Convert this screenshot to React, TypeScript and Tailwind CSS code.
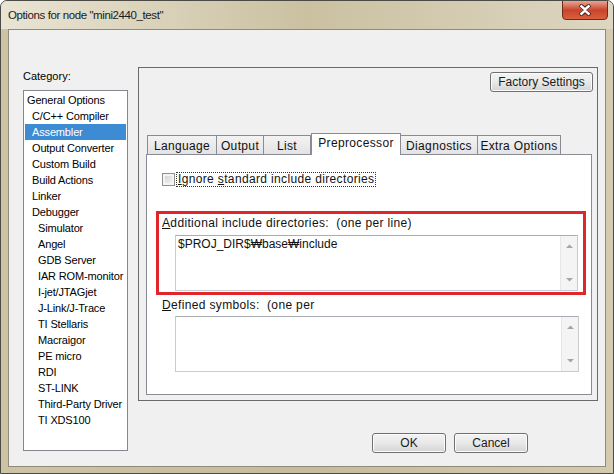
import React from "react";

// Category tree rows: [label, indent level]
const categories: [string, number][] = [
  ["General Options", 0],
  ["C/C++ Compiler", 1],
  ["Assembler", 1],
  ["Output Converter", 1],
  ["Custom Build", 1],
  ["Build Actions", 1],
  ["Linker", 1],
  ["Debugger", 1],
  ["Simulator", 2],
  ["Angel", 2],
  ["GDB Server", 2],
  ["IAR ROM-monitor", 2],
  ["I-jet/JTAGjet", 2],
  ["J-Link/J-Trace", 2],
  ["TI Stellaris", 2],
  ["Macraigor", 2],
  ["PE micro", 2],
  ["RDI", 2],
  ["ST-LINK", 2],
  ["Third-Party Driver", 2],
  ["TI XDS100", 2],
];

const tabs = [
  { label: "Language", w: "w-[70px]" },
  { label: "Output", w: "w-[47px]" },
  { label: "List", w: "w-[47px]" },
  { label: "Preprocessor", w: "w-[90px]", active: true },
  { label: "Diagnostics", w: "w-[77px]" },
  { label: "Extra Options", w: "w-[83px]" },
];

const sans = "font-['Liberation_Sans',Arial,sans-serif]";

function WinButton({ label, className }: { label: string; className: string }) {
  return (
    <div
      className={`flex h-[20px] items-center justify-center rounded-[3px] border border-[#707070] bg-linear-to-b from-[#f3f3f3] via-[#e9e9e9] to-[#d4d4d4] text-[12px] text-[#1a1a1a] shadow-[inset_0_0_0_1px_#fcfcfc] ${className}`}
    >
      {label}
    </div>
  );
}

function ScrollArrows() {
  return (
    <div className="flex w-[17px] flex-col justify-between border-l border-[#e6e6e6] bg-[#f4f4f4] py-[6px]">
      <svg width="17" height="8" viewBox="0 0 17 8">
        <path d="M5 6 L8.5 2.5 L12 6 Z" fill="#a6a6a6" />
      </svg>
      <svg width="17" height="8" viewBox="0 0 17 8">
        <path d="M5 2 L8.5 5.5 L12 2 Z" fill="#a6a6a6" />
      </svg>
    </div>
  );
}

function MultiLine({ text, className }: { text?: string; className: string }) {
  return (
    <div
      className={`flex h-[56px] border border-[#c9cbd0] border-t-[#a9acb3] bg-white ${className}`}
    >
      <div className="flex-1 pl-[2px] pt-[1px] text-[12px] leading-[14px] text-[#111]">
        {text}
      </div>
      <ScrollArrows />
    </div>
  );
}

export default function App() {
  return (
    <div
      className={`flex h-[474px] w-[614px] flex-col overflow-hidden rounded-t-[7px] border border-[#4b4a44] bg-linear-to-r from-[#cdc4a6] via-[#c6bc9b] to-[#d3cab0] ${sans}`}
    >
      {/* title bar */}
      <div className="flex h-[28px] items-start justify-between bg-linear-to-r from-[#e9e4d4] via-[#cbc1a1] to-[#ddd6c1]">
        <div className="ml-[7px] mt-[7px] text-[11.5px] leading-[14px] tracking-[-0.4px] text-[#1a1a1a]">
          Options for node "mini2440_test"
        </div>
        <div className="-mt-px mr-[5px] flex h-[20px] w-[46px] items-center justify-center rounded-b-[4px] border border-[#6e2a1d] bg-linear-to-b from-[#e7a594] via-[#c8432c] to-[#d8603f]">
          <svg width="16" height="12" viewBox="0 0 16 12">
            <path
              d="M3 1 L8 5 L13 1 M3 11 L8 7 L13 11"
              stroke="#3a1a14"
              strokeWidth="4"
              fill="none"
            />
            <path
              d="M3.5 1.5 L8 5.5 L12.5 1.5 M3.5 10.5 L8 6.5 L12.5 10.5"
              stroke="#ffffff"
              strokeWidth="2.4"
              fill="none"
            />
          </svg>
        </div>
      </div>

      {/* client area */}
      <div className="mx-[7px] flex h-[438px] border border-[#8f8a7a] bg-[#f0f0f0]">
        {/* category column */}
        <div className="ml-[14px] mt-[40px] flex w-[105px] flex-col">
          <div className="text-[11px] leading-[13px] text-black">Category:</div>
          <div className="mt-[7px] h-[361px] border border-[#828790] bg-white px-px pt-px">
            {categories.map(([name, level]) => (
              <div
                key={name}
                className={`h-[16px] text-[11px] leading-[16px] tracking-[-0.15px] whitespace-nowrap ${
                  name === "Assembler" ? "bg-[#3d8bd3] text-white" : "text-black"
                } ${level === 0 ? "pl-[2px]" : level === 1 ? "pl-[7px]" : "pl-[13px]"}`}
              >
                {name}
              </div>
            ))}
          </div>
        </div>

        {/* right column */}
        <div className="ml-[10px] flex flex-1 flex-col">
          <div className="mt-[37px] flex h-[334px] w-[460px] flex-col border border-[#6a6a6a]">
            <div className="flex justify-end pr-[4px] pt-[4px]">
              <WinButton label="Factory Settings" className="w-[103px]" />
            </div>

            {/* tab strip */}
            <div className="ml-[8px] mt-[41px] flex h-[21px] items-end">
              {tabs.map((t) =>
                t.active ? (
                  <div
                    key={t.label}
                    className={`relative z-10 -mb-px h-[22px] ${t.w} border border-b-0 border-[#898c95] bg-white pt-[2px] text-center text-[12px] leading-[14px] tracking-[0.35px] text-[#111]`}
                  >
                    {t.label}
                  </div>
                ) : (
                  <div
                    key={t.label}
                    className={`h-[19px] ${t.w} border border-b-0 border-l-0 first:border-l border-[#898c95] bg-linear-to-b from-[#f3f3f3] to-[#e3e3e3] pt-[3px] text-center text-[12px] leading-[14px] tracking-[0.35px] text-[#111]`}
                  >
                    {t.label}
                  </div>
                )
              )}
            </div>

            {/* tab page */}
            <div className="ml-[7px] flex h-[241px] w-[446px] flex-col border border-[#898c95] bg-white">
              <div className="flex items-center pl-[15px] pt-[17px]">
                <div className="h-[13px] w-[13px] border border-[#8e8f8f] bg-[#f4f4f4] p-[2px]">
                  <div className="h-full w-full bg-linear-to-br from-[#d5d5d5] to-[#f2f2f2]" />
                </div>
                <div className="ml-[1px] border border-dotted border-[#333] px-px text-[12px] leading-[13px] tracking-[0.35px] text-[#111]">
                  <span className="underline">I</span>gnore <span className="underline">s</span>tandard include directories
                </div>
              </div>

              {/* highlighted group */}
              <div className="ml-[9px] mr-[5px] mt-[24px] border-[3px] border-[#e0262a] pb-px pl-[3px] pt-[2px]">
                <div className="text-[12px] leading-[14px] tracking-[0.35px] text-[#111]">
                  <span className="underline">A</span>dditional include directories:&nbsp; (one per line)
                </div>
                <MultiLine
                  text="$PROJ_DIR$₩base₩include"
                  className="ml-[13px] mr-[5px] mt-[5px]"
                />
              </div>

              <div className="ml-[15px] mt-[3px] text-[12px] leading-[14px] tracking-[0.35px] text-[#111]">
                <span className="underline">D</span>efined symbols:&nbsp; (one per
              </div>
              <MultiLine className="ml-[28px] mr-[12px] mt-[4px]" />
            </div>
          </div>

          <div className="mt-[32px] flex justify-end gap-[8px] pr-[77px]">
            <WinButton label="OK" className="w-[74px]" />
            <WinButton label="Cancel" className="w-[74px]" />
          </div>
        </div>
      </div>
    </div>
  );
}
